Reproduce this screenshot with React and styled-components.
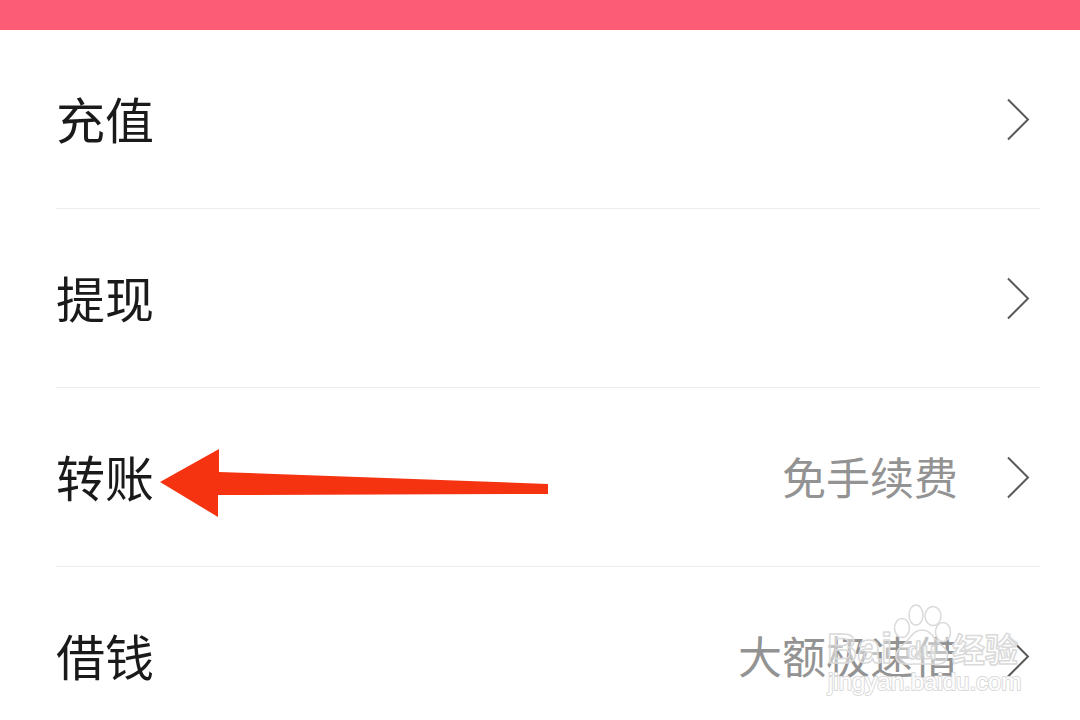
/**
 *
 * WalletMenu
 *
 */

import React, { memo } from 'react';
import styled, { createGlobalStyle } from 'styled-components';

const GlobalStyle = createGlobalStyle`
  * {
    box-sizing: border-box;
  }
  body {
    margin: 0;
    background: #ffffff;
    font-family: 'Noto Sans CJK SC', sans-serif;
  }
`;

const Page = styled.main`
  width: 100%;
`;

const TopBar = styled.header`
  height: 30px;
  background: #fc5c76;
`;

const Menu = styled.ul`
  margin: 0;
  padding: 0 40px 0 56px;
  list-style: none;
`;

const MenuItem = styled.li`
  position: relative;
  border-bottom: 1px solid #ececec;
  &:last-child {
    border-bottom: none;
  }
`;

const MenuLink = styled.a`
  display: flex;
  align-items: center;
  padding: 52px 10px ${({ $last }) => ($last ? '28px' : '54px')} 0;
  color: #1a1a1a;
  text-decoration: none;
`;

const Label = styled.span`
  flex: 1;
  font-size: 49px;
  line-height: 72px;
`;

const Note = styled.span`
  margin-right: 48px;
  color: #939393;
  font-size: 44px;
  line-height: 72px;
`;

const Chevron = styled.svg`
  display: block;
  width: 24px;
  height: 48px;
  fill: none;
  stroke: #5a5a5a;
  stroke-width: 2;
`;

const Pointer = styled.svg`
  position: absolute;
  left: 104px;
  top: 60px;
  width: 390px;
  height: 70px;
  fill: #f53311;
  pointer-events: none;
`;

const Watermark = styled.svg`
  position: absolute;
  right: 16px;
  top: 33px;
  width: 200px;
  height: 100px;
  fill: #ffffff;
  fill-opacity: 0.45;
  stroke: #dadada;
  stroke-width: 1.5;
  stroke-linejoin: round;
  pointer-events: none;
  .latin {
    font-family: 'Liberation Sans', sans-serif;
    font-weight: 700;
  }
  .chinese {
    fill-opacity: 0.8;
    font-weight: 700;
  }
  .site {
    font-family: 'Liberation Sans', sans-serif;
    paint-order: stroke;
    stroke-width: 2;
    fill-opacity: 1;
  }
`;

const items = [
  { label: '充值' },
  { label: '提现' },
  { label: '转账', note: '免手续费', pointed: true },
  { label: '借钱', note: '大额极速借', marked: true },
];

function BaiduMark() {
  return (
    <Watermark viewBox="0 0 200 100" aria-hidden="true">
      <text className="latin" x="3" y="63" fontSize="42">Bai</text>
      <ellipse cx="78" cy="28" rx="7.5" ry="9.5" />
      <ellipse cx="92" cy="15" rx="7" ry="10" />
      <ellipse cx="109" cy="16" rx="8" ry="9.5" />
      <ellipse cx="119" cy="32" rx="7.5" ry="9.5" />
      <path d="M98 30C90 30 87 37 81 43C74 48 71 53 72 58C74 66 84 64 98 64C112 64 121 66 123 58C125 52 121 48 115 43C109 37 106 30 98 30Z" />
      <text className="latin" x="83" y="59" fontSize="24">du</text>
      <text className="chinese" x="128" y="62" fontSize="33">经验</text>
      <text className="site" x="4" y="90" fontSize="24">jingyan.baidu.com</text>
    </Watermark>
  );
}

function App() {
  return (
    <Page>
      <GlobalStyle />
      <TopBar />
      <Menu>
        {items.map((item, index) => (
          <MenuItem key={item.label}>
            <MenuLink href="#" $last={index === items.length - 1}>
              <Label>{item.label}</Label>
              {item.note && <Note>{item.note}</Note>}
              <Chevron viewBox="0 0 24 48" aria-hidden="true">
                <path d="M2 5.5L22 25.5L2 45.5" />
              </Chevron>
            </MenuLink>
            {item.pointed && (
              <Pointer viewBox="0 0 390 70" aria-hidden="true">
                <path d="M0 34L59 1V24L388 36V46L58 47V69Z" />
              </Pointer>
            )}
            {item.marked && <BaiduMark />}
          </MenuItem>
        ))}
      </Menu>
    </Page>
  );
}

export default memo(App);
